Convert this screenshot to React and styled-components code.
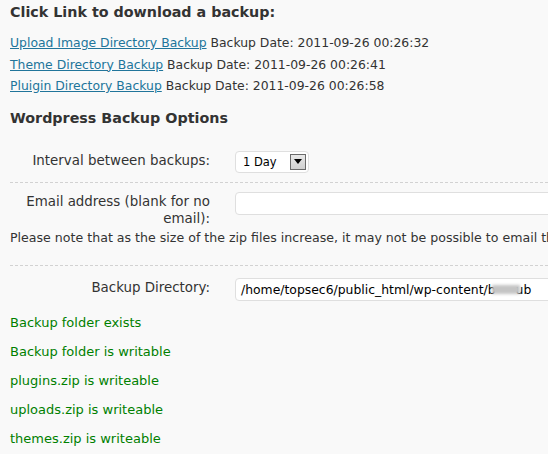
import React from "react";
import styled, { createGlobalStyle } from "styled-components";

const Global = createGlobalStyle`
  html, body {
    margin: 0;
    padding: 0;
    background: #f9f9f9;
    overflow: hidden;
  }
  body {
    font-family: "DejaVu Sans", Verdana, sans-serif;
    font-size: 12.4px;
    color: #333;
  }
`;

const Page = styled.div`
  width: 548px;
  height: 454px;
  overflow: hidden;
  padding: 0 0 0 10px;
  box-sizing: border-box;
`;

const Heading = styled.h3`
  margin: 0;
  font-size: 14.3px;
  font-weight: bold;
  line-height: 20px;
  color: #333;
  padding-top: ${(p) => p.$top || 0}px;
`;

const Links = styled.div`
  display: flex;
  flex-direction: column;
  margin-top: 10px;
`;

const LinkLine = styled.div`
  line-height: 21.5px;
  white-space: nowrap;

  a {
    color: #21759b;
    text-decoration: underline;
  }
`;

const FormTable = styled.div`
  margin-top: 12px;
`;

const Row = styled.div`
  border-bottom: ${(p) => (p.$sep ? "1px dashed #d2d2d2" : "none")};
  padding: ${(p) => p.$pad || "10px 0"};
`;

const Field = styled.div`
  display: flex;
  align-items: flex-start;
  gap: 25px;
`;

const Label = styled.div`
  width: 200px;
  flex: none;
  text-align: right;
  font-size: 13.4px;
  line-height: 17px;
  padding-top: ${(p) => p.$top || 1}px;
`;

const Note = styled.div`
  white-space: nowrap;
  font-size: 12.6px;
  line-height: 17px;
  margin-top: 2px;
`;

const Select = styled.div`
  width: 74px;
  height: 22px;
  box-sizing: border-box;
  border: 1px solid #dfdfdf;
  border-radius: 4px;
  background: #fff;
  display: flex;
  align-items: center;
  justify-content: space-between;
  padding: 0 2px 0 7px;
  font-size: 11.5px;
  color: #000;
`;

const DropButton = styled.span`
  width: 16px;
  height: 16px;
  box-sizing: border-box;
  border: 1px solid #6a6a6a;
  background: linear-gradient(#e8e8e8, #d0d0d0);
  display: flex;
  align-items: center;
  justify-content: center;
`;

const TextInput = styled.div`
  flex: none;
  width: 330px;
  height: 23px;
  box-sizing: border-box;
  border: 1px solid #dfdfdf;
  border-radius: 4px;
  background: #fff;
  display: flex;
  align-items: center;
  padding: 0 5px;
  white-space: nowrap;
  color: #000;
  font-size: 12.4px;
`;

const Smudge = styled.span`
  display: inline-block;
  width: 28px;
  height: 9px;
  background: #c4c4c4;
  filter: blur(1.5px);
  margin: 0 -4px 0 -4px;
`;

const Status = styled.div`
  display: flex;
  flex-direction: column;
  gap: 12px;
  margin-top: 13px;
`;

const StatusLine = styled.div`
  color: #008000;
  font-size: 13px;
  line-height: 17px;
`;

const links = [
  ["Upload Image Directory Backup", "2011-09-26 00:26:32"],
  ["Theme Directory Backup", "2011-09-26 00:26:41"],
  ["Pluigin Directory Backup", "2011-09-26 00:26:58"],
];

const statuses = [
  "Backup folder exists",
  "Backup folder is writable",
  "plugins.zip is writeable",
  "uploads.zip is writeable",
  "themes.zip is writeable",
];

export default function App() {
  return (
    <>
      <Global />
      <Page>
        <Heading $top={2}>Click Link to download a backup:</Heading>
        <Links>
          {links.map(([name, date]) => (
            <LinkLine key={name}>
              <a href="#">{name}</a> Backup Date: {date}
            </LinkLine>
          ))}
        </Links>
        <Heading $top={11}>Wordpress Backup Options</Heading>
        <FormTable>
          <Row $sep $pad="11px 0 9px">
            <Field>
              <Label>Interval between backups:</Label>
              <Select>
                1 Day
                <DropButton>
                  <svg width="8" height="5" viewBox="0 0 8 5">
                    <path d="M0 0h8L4 5z" fill="#000" />
                  </svg>
                </DropButton>
              </Select>
            </Field>
          </Row>
          <Row $sep $pad="9px 0 19px">
            <Field>
              <Label>Email address (blank for no email):</Label>
              <TextInput />
            </Field>
            <Note>
              Please note that as the size of the zip files increase, it may not be possible to email them.
            </Note>
          </Row>
          <Row $pad="12px 0 0">
            <Field>
              <Label>Backup Directory:</Label>
              <TextInput>
                /home/topsec6/public_html/wp-content/b<Smudge />ub
              </TextInput>
            </Field>
          </Row>
        </FormTable>
        <Status>
          {statuses.map((s) => (
            <StatusLine key={s}>{s}</StatusLine>
          ))}
        </Status>
      </Page>
    </>
  );
}
